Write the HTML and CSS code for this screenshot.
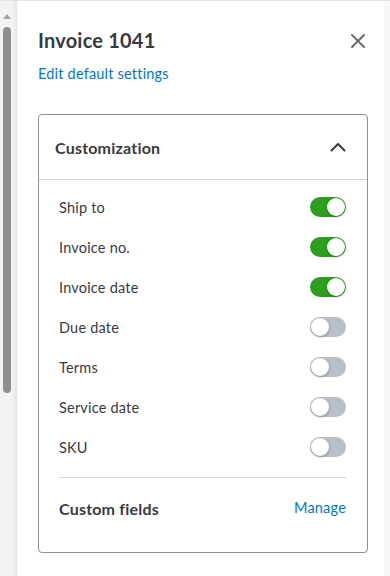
FILE: index.html
```html
<!DOCTYPE html>
<html>
<head>
    <meta name="viewport" content="width=device-width, initial-scale=1.0">
    <title>Invoice 1041</title>
    <link rel="stylesheet" href="styles.css">
</head>
<body>
    <div class="screen">
        <div class="scroll-track">
            <div class="scroll-arrow"></div>
            <div class="scroll-thumb"></div>
        </div>
        <div class="panel">
            <div class="panel-head">
                <div>
                    <h1>Invoice 1041</h1>
                    <a class="link" href="#">Edit default settings</a>
                </div>
                <button class="close" aria-label="Close">
                    <svg width="16" height="16" viewBox="0 0 16 16"><path d="M2 2 L14 14 M14 2 L2 14" stroke="#6b6c72" stroke-width="2" stroke-linecap="round"/></svg>
                </button>
            </div>

            <div class="card">
                <div class="card-head">
                    <span>Customization</span>
                    <svg width="16" height="10" viewBox="0 0 16 10"><path d="M1.5 8.5 L8 2 L14.5 8.5" fill="none" stroke="#393a3d" stroke-width="2" stroke-linecap="round" stroke-linejoin="round"/></svg>
                </div>
                <div class="options" id="options"></div>
                <div class="custom-row">
                    <span>Custom fields</span>
                    <a class="link" href="#">Manage</a>
                </div>
            </div>
        </div>
        <div class="edge"></div>
    </div>

    <script>
        const fields = [
            ['Ship to', true],
            ['Invoice no.', true],
            ['Invoice date', true],
            ['Due date', false],
            ['Terms', false],
            ['Service date', false],
            ['SKU', false]
        ];
        const list = document.getElementById('options');
        fields.forEach(([name, on]) => {
            const row = document.createElement('div');
            row.className = 'option';
            const label = document.createElement('span');
            label.textContent = name;
            const toggle = document.createElement('span');
            toggle.className = on ? 'toggle on' : 'toggle';
            toggle.appendChild(document.createElement('span'));
            row.appendChild(label);
            row.appendChild(toggle);
            list.appendChild(row);
        });
    </script>
</body>
</html>
```

FILE: styles.css
```css
* {
    margin: 0;
    padding: 0;
    box-sizing: border-box;
}

body {
    font-family: 'Lato', 'Open Sans', sans-serif;
    color: #393a3d;
    background: #fff;
}

.screen {
    display: flex;
    height: 576px;
    border-top: 1px solid #e3e5e8;
    overflow: hidden;
}

.scroll-track {
    width: 17px;
    flex-shrink: 0;
    background: linear-gradient(90deg, #f3f3f3 0, #f3f3f3 12px, #e4e5e8 17px);
    display: flex;
    flex-direction: column;
    align-items: center;
    padding-top: 13px;
    padding-right: 3px;
}

.scroll-arrow {
    width: 0;
    height: 0;
    border-left: 4px solid transparent;
    border-right: 4px solid transparent;
    border-bottom: 5px solid #a3a3a3;
}

.scroll-thumb {
    margin-top: 8px;
    width: 8px;
    height: 366px;
    background: #8f8f8f;
    border-radius: 4px;
}

.panel {
    flex: 1;
    padding: 25px 16px 0 21px;
}

.edge {
    width: 6px;
    flex-shrink: 0;
    background: #f8f8f9;
}

.panel-head {
    display: flex;
    justify-content: space-between;
    align-items: flex-start;
    padding-right: 2px;
}

h1 {
    font-size: 20px;
    font-weight: 700;
    line-height: 28px;
    letter-spacing: 0.2px;
    color: #393a3d;
}

.link {
    display: block;
    color: #0077c5;
    text-decoration: none;
    font-size: 14.5px;
    letter-spacing: 0.2px;
    line-height: 20px;
    margin-top: 10px;
}

.close {
    border: none;
    background: none;
    margin-top: 7px;
    width: 16px;
    height: 16px;
    cursor: pointer;
}

.card {
    margin-top: 30px;
    border: 1px solid #8d9096;
    border-radius: 4px;
    height: 439px;
}

.card-head {
    display: flex;
    justify-content: space-between;
    align-items: center;
    height: 65px;
    padding: 0 21px 0 16px;
    border-bottom: 1px solid #d4d7dc;
    font-size: 16px;
    font-weight: 700;
    letter-spacing: 0.2px;
}

.options {
    padding: 7px 0 10px 0;
    margin: 0 21px 0 20px;
    border-bottom: 1px solid #d4d7dc;
}

.option {
    display: flex;
    justify-content: space-between;
    align-items: center;
    height: 40px;
    font-size: 14.5px;
    letter-spacing: 0.2px;
}

.toggle {
    width: 36px;
    height: 20px;
    border-radius: 10px;
    background: #babec5;
    display: flex;
    align-items: center;
    padding: 1px;
}

.toggle span {
    width: 18px;
    height: 18px;
    border-radius: 50%;
    background: #fff;
    box-shadow: 0 1px 3px rgba(0, 0, 0, 0.3);
}

.toggle.on {
    background: #2ca01c;
    justify-content: flex-end;
}

.custom-row {
    display: flex;
    justify-content: space-between;
    align-items: center;
    height: 60px;
    margin: 0 21px 0 20px;
    font-size: 16px;
    font-weight: 700;
    letter-spacing: 0.2px;
}

.custom-row .link {
    margin-top: 0;
    font-weight: 400;
}
```
